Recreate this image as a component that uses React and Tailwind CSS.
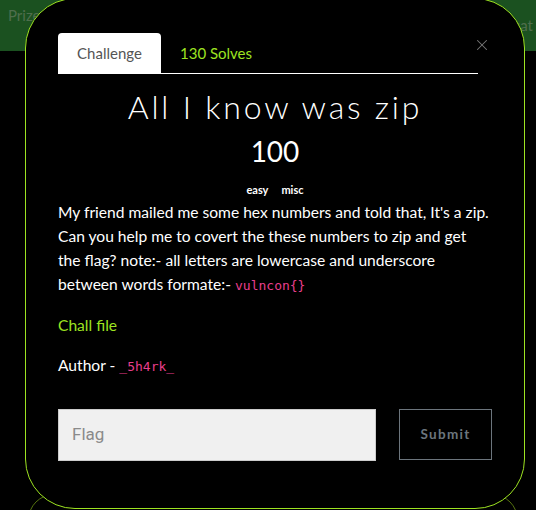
import React from "react";
import { X } from "lucide-react";

// ── Challenge modal ───────────────────────────────────────
function ChallengeModal() {
  return (
    <div className="absolute left-[25px] top-[-2px] w-[500px] h-[511px] rounded-[50px] border-[1.5px] border-[#9de321] bg-black px-8 pt-[35px]">
      {/* Tabs */}
      <div className="flex items-start">
        <div className="flex-1 flex items-end border-b border-white h-[40px]">
          <div className="h-[40px] w-[103px] bg-white rounded-t-[4px] flex items-center justify-center text-[15px] text-[#555]">
            Challenge
          </div>
          <div className="h-[40px] px-[19px] flex items-center text-[15px] text-[#9de321]">
            130 Solves
          </div>
        </div>
        <button className="w-[14px] mt-[2px] -translate-x-[5px] text-[#777]">
          <X size={18} strokeWidth={1.4} />
        </button>
      </div>

      {/* Title */}
      <h2 className="mt-[13px] text-center text-[32px] leading-[40px] font-light text-white tracking-[2.8px]">
        All I know was zip
      </h2>
      <div className="mt-[6px] text-center text-[28px] leading-[36px] text-white">
        100
      </div>
      <div className="mt-[13px] flex justify-center gap-[13px] text-[11px] leading-[16px] font-bold text-white">
        <span>easy</span>
        <span>misc</span>
      </div>

      {/* Description */}
      <p className="mt-[2px] w-[432px] text-[15.6px] leading-[24px] text-white">
        My friend mailed me some hex numbers and told that, It's a zip. Can
        you help me to covert the these numbers to zip and get the flag?
        note:- all letters are lowercase and underscore between words
        formate:-{" "}
        <code className="font-['DejaVu_Sans_Mono',monospace] text-[13px] leading-[16px] text-[#e83e8c]">
          {"vulncon{}"}
        </code>
      </p>

      <div className="mt-[17px] text-[15.6px] leading-[24px] text-[#9de321]">
        Chall file
      </div>
      <div className="mt-[16px] text-[15.6px] leading-[24px] text-white">
        Author -{" "}
        <code className="font-['DejaVu_Sans_Mono',monospace] text-[13px] leading-[16px] text-[#e83e8c]">
          _5h4rk_
        </code>
      </div>

      {/* Flag form */}
      <div className="mt-[32px] flex gap-[23px]">
        <div className="w-[318px] h-[52px] bg-[#f0f0f0] border border-[#ccc] flex items-center pl-[13px] font-['Roboto',sans-serif] text-[17px] text-[#8a8a8a]">
          Flag
        </div>
        <button className="w-[93px] h-[51px] border border-[#6c757d] text-[13.5px] font-bold tracking-[1.3px] text-[#6c757d]">
          Submit
        </button>
      </div>
    </div>
  );
}

// ── MAIN ──────────────────────────────────────────────────
export default function App() {
  return (
    <div className="relative w-[536px] h-[510px] overflow-hidden bg-black font-['Lato','Noto_Sans',sans-serif]">
      {/* Dimmed navbar behind the overlay */}
      <div className="h-[51px] bg-[#1b5120] flex justify-between text-[15px] text-[#4f6e4d]">
        <span className="pl-[8px] pt-[4px]">Prizes</span>
        <span className="pt-[14px] pr-[3px]">Notificat</span>
      </div>

      {/* Card behind the modal */}
      <div className="absolute left-[28px] top-[494px] w-[490px] h-[60px] rounded-[26px] border border-[#55720f]" />

      <ChallengeModal />
    </div>
  );
}
